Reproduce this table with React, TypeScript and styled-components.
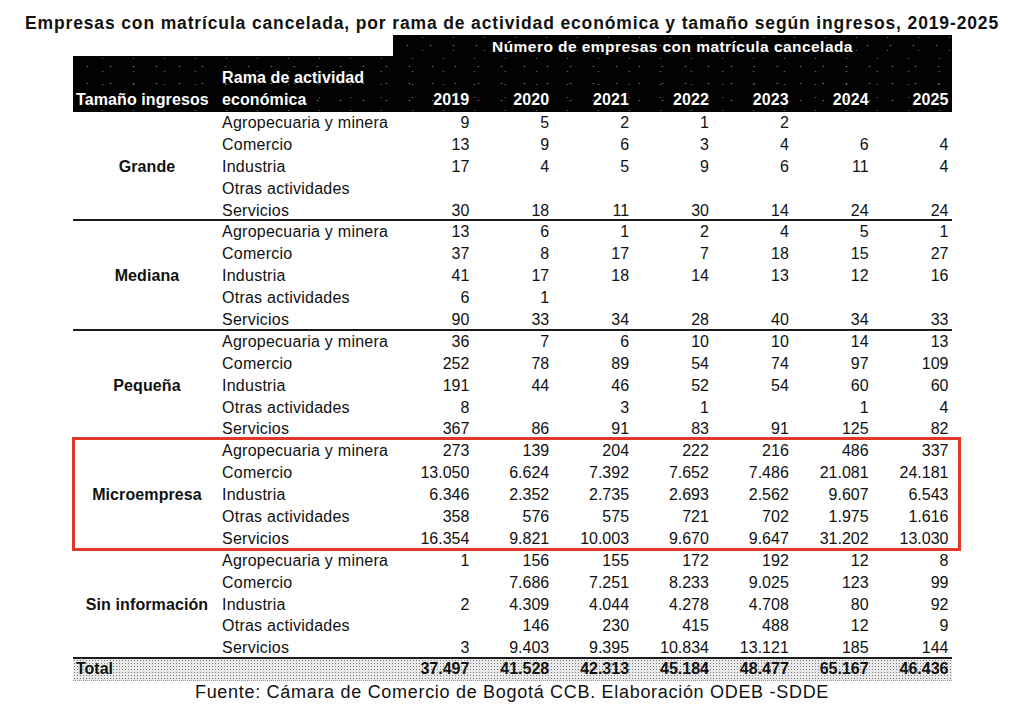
import React from 'react';
import styled, { createGlobalStyle } from 'styled-components';

const GlobalStyle = createGlobalStyle`
  html, body { margin: 0; padding: 0; background: #ffffff; }
  body { font-family: "Liberation Sans", Arial, sans-serif; color: #111; }
`;

const COLS = '145px 175px repeat(7, 1fr)';
const ROW_H = 21.9;

const Page = styled.div`
  width: 1024px;
  height: 713px;
  padding-top: 13px;
  box-sizing: border-box;
  overflow: hidden;
`;

const Title = styled.h1`
  margin: 0;
  font-size: 17.5px;
  line-height: 21.5px;
  font-weight: 700;
  text-align: center;
  color: #111;
  letter-spacing: 0.86px;
  white-space: nowrap;
`;

const Table = styled.div`
  margin-left: 73px;
  width: 879px;
  font-size: 16px;
`;

const speckle = `
  background-color: #020202;
  background-image:
    radial-gradient(rgba(210,210,210,0.6) 0.6px, transparent 1.1px),
    radial-gradient(rgba(210,210,210,0.45) 0.6px, transparent 1.1px);
  background-size: 23px 17px, 31px 13px;
  background-position: 3px 2px, 14px 9px;
`;

const HeaderBand = styled.div`
  display: grid;
  grid-template-columns: ${COLS};
  height: 21px;
`;

const BandTitle = styled.div`
  grid-column: 3 / -1;
  ${speckle}
  color: #fff;
  font-weight: 700;
  font-size: 15.5px;
  line-height: 23px;
  text-align: center;
  letter-spacing: 0.45px;
`;

const HeaderMain = styled.div`
  display: grid;
  grid-template-columns: ${COLS};
  height: 56.5px;
  align-items: end;
  ${speckle}
  color: #fff;
  font-weight: 700;
  line-height: 22px;
`;

const HeadCell = styled.div<{ $align?: 'left' | 'right'; $pad?: number }>`
  text-align: ${(p) => p.$align ?? 'right'};
  padding-left: ${(p) => (p.$align === 'left' ? `${p.$pad ?? 3}px` : '0')};
  padding-right: ${(p) => (p.$align === 'left' ? '0' : '3.5px')};
  padding-bottom: 1px;
  white-space: nowrap;
  letter-spacing: 0.1px;
`;

const GroupBlock = styled.div`
  position: relative;
  display: grid;
  grid-template-columns: ${COLS};
  grid-template-rows: repeat(5, ${ROW_H}px);
  line-height: ${ROW_H}px;
  box-shadow: inset 0 -2px 0 #1c1c1c;
`;

const GroupLabel = styled.div`
  grid-column: 1;
  grid-row: 1 / span 5;
  align-self: center;
  text-align: center;
  padding-left: 3px;
  font-weight: 700;
  letter-spacing: 0.1px;
`;

const RamaCell = styled.div`
  grid-column: 2;
  padding-left: 4px;
  white-space: nowrap;
  letter-spacing: 0.25px;
`;

const NumCell = styled.div`
  text-align: right;
  padding-right: 3.5px;
  white-space: nowrap;
`;

const Highlight = styled.span`
  position: absolute;
  top: -3px;
  left: -1px;
  right: -9px;
  bottom: -1px;
  border: 3px solid #e2382a;
  pointer-events: none;
`;

const TotalRow = styled.div`
  display: grid;
  grid-template-columns: ${COLS};
  height: 21px;
  line-height: 20px;
  font-weight: 700;
  background-color: #e9e9e9;
  background-image: radial-gradient(#7d7d7d 0.55px, transparent 1px);
  background-size: 3px 3px;
  border-bottom: 1px dotted #9a9a9a;
`;

const TotalLabel = styled.div`
  grid-column: 1 / span 2;
  padding-left: 3px;
`;

const Footer = styled.p`
  margin: 0;
  text-align: center;
  font-size: 18px;
  line-height: 22px;
  color: #111;
  letter-spacing: 0.7px;
  white-space: nowrap;
`;

type Row = [string, string[]];
type Group = { name: string; rows: Row[]; highlight?: boolean };

const groups: Group[] = [
  {
    name: 'Grande',
    rows: [
      ['Agropecuaria y minera', ['9', '5', '2', '1', '2', '', '']],
      ['Comercio', ['13', '9', '6', '3', '4', '6', '4']],
      ['Industria', ['17', '4', '5', '9', '6', '11', '4']],
      ['Otras actividades', ['', '', '', '', '', '', '']],
      ['Servicios', ['30', '18', '11', '30', '14', '24', '24']],
    ],
  },
  {
    name: 'Mediana',
    rows: [
      ['Agropecuaria y minera', ['13', '6', '1', '2', '4', '5', '1']],
      ['Comercio', ['37', '8', '17', '7', '18', '15', '27']],
      ['Industria', ['41', '17', '18', '14', '13', '12', '16']],
      ['Otras actividades', ['6', '1', '', '', '', '', '']],
      ['Servicios', ['90', '33', '34', '28', '40', '34', '33']],
    ],
  },
  {
    name: 'Pequeña',
    rows: [
      ['Agropecuaria y minera', ['36', '7', '6', '10', '10', '14', '13']],
      ['Comercio', ['252', '78', '89', '54', '74', '97', '109']],
      ['Industria', ['191', '44', '46', '52', '54', '60', '60']],
      ['Otras actividades', ['8', '', '3', '1', '', '1', '4']],
      ['Servicios', ['367', '86', '91', '83', '91', '125', '82']],
    ],
  },
  {
    name: 'Microempresa',
    highlight: true,
    rows: [
      ['Agropecuaria y minera', ['273', '139', '204', '222', '216', '486', '337']],
      ['Comercio', ['13.050', '6.624', '7.392', '7.652', '7.486', '21.081', '24.181']],
      ['Industria', ['6.346', '2.352', '2.735', '2.693', '2.562', '9.607', '6.543']],
      ['Otras actividades', ['358', '576', '575', '721', '702', '1.975', '1.616']],
      ['Servicios', ['16.354', '9.821', '10.003', '9.670', '9.647', '31.202', '13.030']],
    ],
  },
  {
    name: 'Sin información',
    rows: [
      ['Agropecuaria y minera', ['1', '156', '155', '172', '192', '12', '8']],
      ['Comercio', ['', '7.686', '7.251', '8.233', '9.025', '123', '99']],
      ['Industria', ['2', '4.309', '4.044', '4.278', '4.708', '80', '92']],
      ['Otras actividades', ['', '146', '230', '415', '488', '12', '9']],
      ['Servicios', ['3', '9.403', '9.395', '10.834', '13.121', '185', '144']],
    ],
  },
];

const years = ['2019', '2020', '2021', '2022', '2023', '2024', '2025'];
const totals = ['37.497', '41.528', '42.313', '45.184', '48.477', '65.167', '46.436'];

export default function App() {
  return (
    <>
      <GlobalStyle />
      <Page>
        <Title>
          Empresas con matrícula cancelada, por rama de actividad económica y tamaño según ingresos, 2019-2025
        </Title>
        <Table>
          <HeaderBand>
            <div />
            <div />
            <BandTitle>Número de empresas con matrícula cancelada</BandTitle>
          </HeaderBand>
          <HeaderMain>
            <HeadCell $align="left" $pad={3}>Tamaño ingresos</HeadCell>
            <HeadCell $align="left" $pad={4}>
              Rama de actividad
              <br />
              económica
            </HeadCell>
            {years.map((y) => (
              <HeadCell key={y}>{y}</HeadCell>
            ))}
          </HeaderMain>
          {groups.map((g) => (
            <GroupBlock key={g.name}>
              <GroupLabel>{g.name}</GroupLabel>
              {g.rows.map(([rama, vals]) => (
                <React.Fragment key={rama}>
                  <RamaCell>{rama}</RamaCell>
                  {vals.map((v, i) => (
                    <NumCell key={i}>{v}</NumCell>
                  ))}
                </React.Fragment>
              ))}
              {g.highlight && <Highlight />}
            </GroupBlock>
          ))}
          <TotalRow>
            <TotalLabel>Total</TotalLabel>
            {totals.map((t, i) => (
              <NumCell key={i}>{t}</NumCell>
            ))}
          </TotalRow>
        </Table>
        <Footer>Fuente: Cámara de Comercio de Bogotá CCB. Elaboración ODEB -SDDE</Footer>
      </Page>
    </>
  );
}
